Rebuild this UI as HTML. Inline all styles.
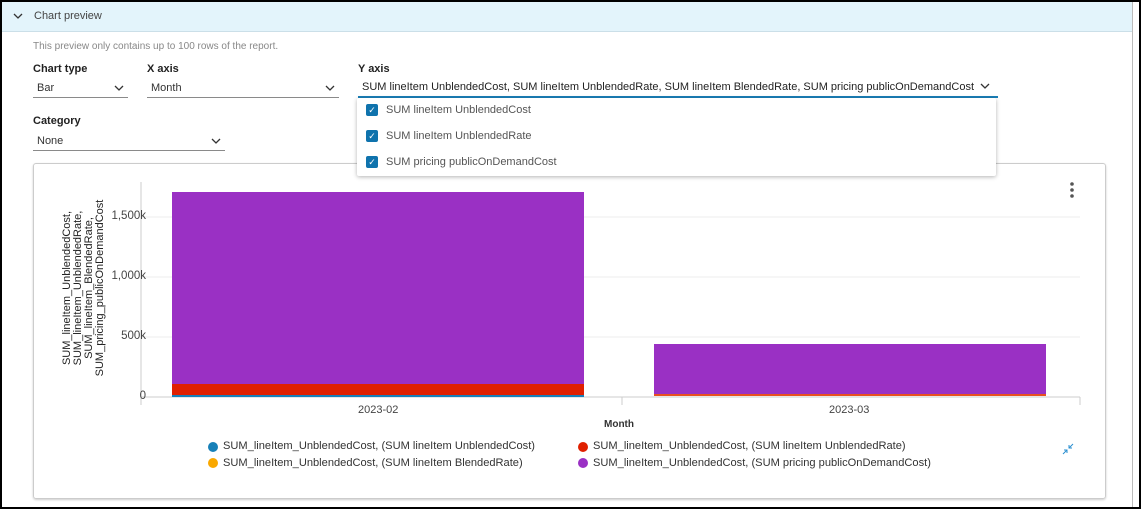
<!DOCTYPE html>
<html><head><style>
*{margin:0;padding:0;box-sizing:border-box}
body{width:1145px;height:513px;background:#fff;font-family:"Liberation Sans",sans-serif;position:relative;overflow:hidden;color:#333}
.a{position:absolute;white-space:nowrap}
.lbl{font-size:11px;font-weight:bold;color:#222}
.sel{position:absolute;border-bottom:1px solid #8a8a8a;font-size:11px;color:#333;padding-left:4px}
.chev{position:absolute;right:4px;top:0;font-size:10px}
.cb{position:absolute;width:12px;height:12px;background:#0f73ad;border-radius:2px;color:#fff;font-size:9px;line-height:12px;text-align:center}
.dot{position:absolute;width:10px;height:10px;border-radius:50%}
.leg{font-size:11.1px;color:#333}
.tick{font-size:11.5px;color:#444;text-align:right;width:40px}
</style></head><body>
<div class="a" style="left:0;top:0;width:1141px;height:509px;border:2px solid #000"></div>
<div class="a" style="left:2px;top:2px;width:1131px;height:30px;background:#e3f4fb;border-bottom:1px solid #cbdfe8"></div>
<div class="a" style="left:1132px;top:2px;width:1px;height:505px;background:#bbb"></div>
<svg class="a" style="left:13px;top:13px" width="10" height="7"><path d="M1 1 L5 5 L9 1" stroke="#333" stroke-width="1.3" fill="none"/></svg>
<div class="a" style="left:34px;top:10px;font-size:11px;color:#444">Chart preview</div>
<div class="a" style="left:33px;top:41px;font-size:10px;color:#888">This preview only contains up to 100 rows of the report.</div>
<div class="a lbl" style="left:33px;top:63px">Chart type</div>
<div class="a lbl" style="left:147px;top:63px">X axis</div>
<div class="a lbl" style="left:358px;top:63px">Y axis</div>
<div class="a lbl" style="left:33px;top:115px">Category</div>
<div class="sel" style="left:33px;top:82px;width:95px;height:16px">Bar<svg class="chev" style="top:3px" width="10" height="7"><path d="M1 1 L5 5 L9 1" stroke="#333" stroke-width="1.3" fill="none"/></svg></div>
<div class="sel" style="left:147px;top:82px;width:192px;height:16px">Month<svg class="chev" style="top:3px" width="10" height="7"><path d="M1 1 L5 5 L9 1" stroke="#333" stroke-width="1.3" fill="none"/></svg></div>
<div class="sel" style="left:33px;top:135px;width:192px;height:16px">None<svg class="chev" style="top:3px" width="10" height="7"><path d="M1 1 L5 5 L9 1" stroke="#333" stroke-width="1.3" fill="none"/></svg></div>
<div class="sel" style="left:358px;top:81px;width:640px;height:17px;border-bottom:2px solid #1a7fb8;color:#222;font-size:11px;padding-left:4px">SUM lineItem UnblendedCost, SUM lineItem UnblendedRate, SUM lineItem BlendedRate, SUM pricing publicOnDemandCost<svg class="chev" style="top:2px;right:8px" width="10" height="7"><path d="M1 1 L5 5 L9 1" stroke="#333" stroke-width="1.3" fill="none"/></svg></div>

<div class="a" style="left:33px;top:163px;width:1073px;height:336px;border:1px solid #ccc;border-radius:3px;box-shadow:0 1px 2px rgba(0,0,0,.2)"></div>
<svg class="a" style="left:0;top:0" width="1145" height="513">
<g stroke="#eee" stroke-width="1"><line x1="141" y1="217" x2="1080" y2="217"/><line x1="141" y1="277" x2="1080" y2="277"/><line x1="141" y1="337" x2="1080" y2="337"/></g>
<line x1="141" y1="182" x2="141" y2="405" stroke="#ccc"/>
<line x1="141" y1="397" x2="1080" y2="397" stroke="#ccc"/>
<line x1="622" y1="397" x2="622" y2="405" stroke="#ccc"/>
<line x1="1080" y1="397" x2="1080" y2="405" stroke="#ccc"/>
<rect x="172" y="192" width="412" height="192" fill="#9a30c4"/>
<rect x="172" y="384" width="412" height="11" fill="#e02000"/>
<rect x="172" y="395" width="412" height="2" fill="#1780b8"/>
<rect x="654" y="344" width="392" height="50" fill="#9a30c4"/>
<rect x="654" y="394" width="392" height="2" fill="#e85020"/>
<circle cx="1072" cy="184" r="1.8" fill="#555"/><circle cx="1072" cy="190" r="1.8" fill="#555"/><circle cx="1072" cy="196" r="1.8" fill="#555"/>
<g stroke="#2a8fd0" stroke-width="1" fill="none"><path d="M1063 454 L1067 450 M1064 450 L1067 450 L1067 453"/><path d="M1073 444 L1069 448 M1069 445 L1069 448 L1072 448"/></g>
</svg>
<div class="a tick" style="left:106px;top:210px">1,500k</div>
<div class="a tick" style="left:106px;top:270px">1,000k</div>
<div class="a tick" style="left:106px;top:330px">500k</div>
<div class="a tick" style="left:106px;top:390px">0</div>
<div class="a" style="left:84px;top:288px;transform:translate(-50%,-50%) rotate(-90deg);font-size:11px;line-height:11px;text-align:center;color:#222">SUM_lineItem_UnblendedCost,<br>SUM_lineItem_UnblendedRate,<br>SUM_lineItem_BlendedRate,<br>SUM_pricing_publicOnDemandCost</div>
<div class="a" style="left:358px;top:404px;font-size:11px;color:#444">2023-02</div>
<div class="a" style="left:829px;top:404px;font-size:11px;color:#444">2023-03</div>
<div class="a" style="left:604px;top:419px;font-size:10px;font-weight:bold;color:#333">Month</div>
<div class="dot" style="left:208px;top:442px;background:#1780b8"></div>
<div class="dot" style="left:208px;top:458px;background:#f9a800"></div>
<div class="dot" style="left:578px;top:442px;background:#e02000"></div>
<div class="dot" style="left:578px;top:458px;background:#9a30c4"></div>
<div class="a leg" style="left:223px;top:440px">SUM_lineItem_UnblendedCost, (SUM lineItem UnblendedCost)</div>
<div class="a leg" style="left:223px;top:457px">SUM_lineItem_UnblendedCost, (SUM lineItem BlendedRate)</div>
<div class="a leg" style="left:593px;top:440px">SUM_lineItem_UnblendedCost, (SUM lineItem UnblendedRate)</div>
<div class="a leg" style="left:593px;top:457px">SUM_lineItem_UnblendedCost, (SUM pricing publicOnDemandCost)</div>

<div class="a" style="left:357px;top:98px;width:639px;height:78px;background:#fff;box-shadow:0 1px 4px rgba(0,0,0,.3);border-radius:2px"></div>
<div class="cb" style="left:366px;top:104px">&#10003;</div>
<div class="cb" style="left:366px;top:130px">&#10003;</div>
<div class="cb" style="left:366px;top:156px">&#10003;</div>
<div class="a" style="left:386px;top:104px;font-size:11px;color:#555">SUM lineItem UnblendedCost</div>
<div class="a" style="left:386px;top:130px;font-size:11px;color:#555">SUM lineItem UnblendedRate</div>
<div class="a" style="left:386px;top:156px;font-size:11px;color:#555">SUM pricing publicOnDemandCost</div>
</body></html>
